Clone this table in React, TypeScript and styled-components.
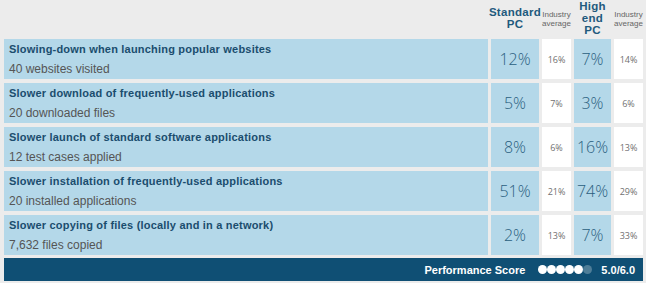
import React from 'react';
import styled, { createGlobalStyle } from 'styled-components';

const GlobalStyle = createGlobalStyle`
  html, body {
    margin: 0;
    padding: 0;
    background: #ececec;
  }
`;

const Page = styled.div`
  width: 646px;
  height: 283px;
  box-sizing: border-box;
  padding: 0 3px 0 4px;
  font-family: 'Liberation Sans', Arial, sans-serif;
  overflow: hidden;
`;

const Grid = styled.div`
  display: grid;
  grid-template-columns: 484px 48px 29px 37px 29px;
  grid-template-rows: 35px repeat(5, 40px);
  column-gap: 3px;
  row-gap: 4px;
`;

const HeaderCell = styled.div<{ $small?: boolean }>`
  display: flex;
  align-items: center;
  justify-content: center;
  text-align: center;
  color: ${(p) => (p.$small ? '#666' : '#1f5a7d')};
  font-weight: ${(p) => (p.$small ? 'normal' : 'bold')};
  font-size: ${(p) => (p.$small ? '8px' : '11.5px')};
  line-height: ${(p) => (p.$small ? '9px' : '12px')};
  letter-spacing: ${(p) => (p.$small ? '0' : '0.3px')};
  padding-top: ${(p) => (p.$small ? '2px' : '0')};
  white-space: nowrap;
`;

const Spacer = styled.div``;

const RowCell = styled.div<{ $white?: boolean }>`
  background: ${(p) => (p.$white ? '#ffffff' : '#b4d8e9')};
`;

const LabelCell = styled(RowCell)`
  padding: 3px 0 0 5px;
  box-sizing: border-box;
`;

const Title = styled.div`
  font-weight: bold;
  font-size: 11px;
  letter-spacing: 0.2px;
  color: #1b4d6e;
  line-height: 14px;
`;

const Sub = styled.div`
  font-size: 12px;
  color: #555;
  margin-top: 6px;
  line-height: 14px;
`;

const ValueCell = styled(RowCell)`
  display: flex;
  align-items: center;
  justify-content: center;
  font-family: 'Open Sans', sans-serif;
  font-weight: 300;
  font-size: 16px;
  color: #2b5f80;
`;

const AvgCell = styled(RowCell)`
  display: flex;
  align-items: center;
  justify-content: center;
  font-family: 'Open Sans', sans-serif;
  font-size: 9px;
  color: #707070;
`;

const ScoreBar = styled.div`
  margin-top: 3px;
  height: 23px;
  width: 639px;
  background: #0f4f74;
  display: flex;
  align-items: center;
  justify-content: flex-end;
  padding-right: 8px;
  box-sizing: border-box;
  color: #fff;
  font-weight: bold;
  font-size: 11px;
`;

const Dots = styled.div`
  display: flex;
  margin: 0 9px 0 13px;
`;

const Dot = styled.span<{ $off?: boolean }>`
  width: 9px;
  height: 9px;
  border-radius: 50%;
  background: ${(p) => (p.$off ? '#4f7e98' : '#ffffff')};
`;

const rows = [
  { title: 'Slowing-down when launching popular websites', sub: '40 websites visited', std: '12%', stdAvg: '16%', high: '7%', highAvg: '14%' },
  { title: 'Slower download of frequently-used applications', sub: '20 downloaded files', std: '5%', stdAvg: '7%', high: '3%', highAvg: '6%' },
  { title: 'Slower launch of standard software applications', sub: '12 test cases applied', std: '8%', stdAvg: '6%', high: '16%', highAvg: '13%' },
  { title: 'Slower installation of frequently-used applications', sub: '20 installed applications', std: '51%', stdAvg: '21%', high: '74%', highAvg: '29%' },
  { title: 'Slower copying of files (locally and in a network)', sub: '7,632 files copied', std: '2%', stdAvg: '13%', high: '7%', highAvg: '33%' },
];

export default function App() {
  return (
    <>
      <GlobalStyle />
      <Page>
        <Grid>
          <Spacer />
          <HeaderCell>Standard<br />PC</HeaderCell>
          <HeaderCell $small>Industry<br />average</HeaderCell>
          <HeaderCell>High<br />end<br />PC</HeaderCell>
          <HeaderCell $small>Industry<br />average</HeaderCell>
          {rows.map((r) => (
            <React.Fragment key={r.title}>
              <LabelCell>
                <Title>{r.title}</Title>
                <Sub>{r.sub}</Sub>
              </LabelCell>
              <ValueCell>{r.std}</ValueCell>
              <AvgCell $white>{r.stdAvg}</AvgCell>
              <ValueCell>{r.high}</ValueCell>
              <AvgCell $white>{r.highAvg}</AvgCell>
            </React.Fragment>
          ))}
        </Grid>
        <ScoreBar>
          Performance Score
          <Dots>
            {[0, 1, 2, 3, 4, 5].map((i) => (
              <Dot key={i} $off={i === 5} />
            ))}
          </Dots>
          5.0/6.0
        </ScoreBar>
      </Page>
    </>
  );
}
